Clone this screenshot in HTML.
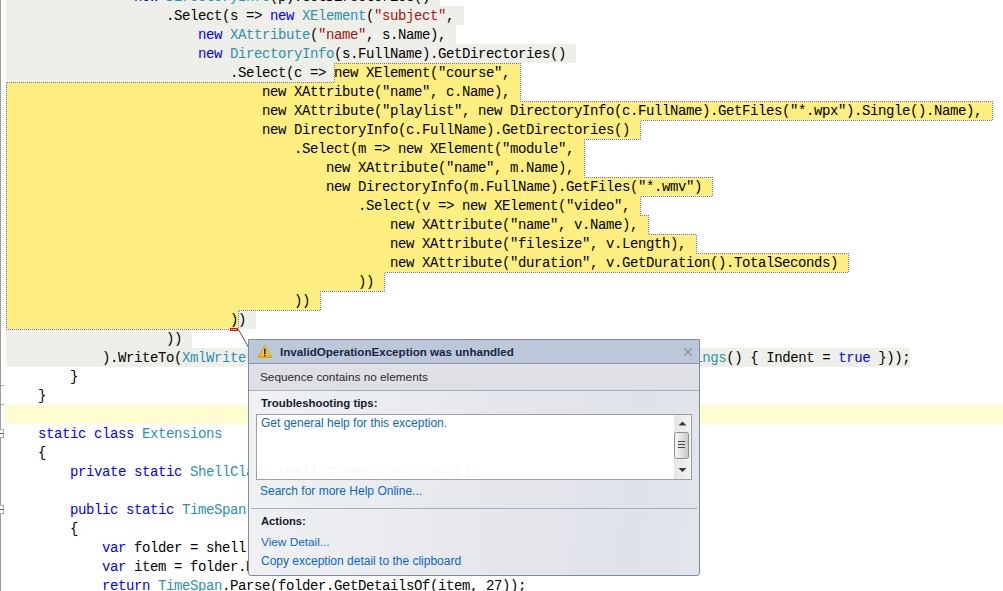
<!DOCTYPE html>
<html><head><meta charset="utf-8">
<style>
*{margin:0;padding:0;box-sizing:border-box}
html,body{width:1003px;height:591px;overflow:hidden;background:#fff}
body{position:relative}
.g,.y{position:absolute;height:19px}
.g{background:#efefe9}
.y{background:#ffee80}
.cur{position:absolute;left:5px;top:405px;width:998px;height:19px;background:#fffcd0}
.ln{position:absolute;height:20px;white-space:pre;font-family:"Liberation Mono",monospace;font-size:14px;letter-spacing:-0.4px;line-height:19px;padding-top:1px;color:#000}
.ln i{font-style:normal}
.k{color:#0000ff}.t{color:#2b91af}.s{color:#a31515}
.yel i{color:#000}
#outline{position:absolute;left:0;top:0;width:1px;height:591px;background:#9c9c9c}
.tick{position:absolute;left:0;width:4px;height:1px;background:#a5a5a5}
.box{position:absolute;left:-5px;width:9px;height:9px;border:1px solid #a5a5a5;background:#fff}
.box:after{content:"";position:absolute;left:4px;top:3px;width:3px;height:1px;background:#555}
svg.ov{position:absolute;left:0;top:0}
#pop{position:absolute;left:248px;top:339px;width:452px;height:237px;border:1px solid #7a8ca4;
 background:linear-gradient(95deg,#f0f1f3 0%,#e8e9ed 45%,#dfe2e9 85%,#e2e5ea 100%);
 font-family:"Liberation Sans",sans-serif;font-size:12px;border-radius:0 0 3px 3px;}
#title{position:absolute;left:0;top:0;width:450px;height:24px;background:#bcc8da;border-bottom:1px solid #8595ab}
#title b{position:absolute;left:31px;top:5px;color:#182640;font-size:11.6px;white-space:nowrap}
#close{position:absolute;left:435px;top:8px;width:8px;height:8px}
#msgband{position:absolute;left:0;top:24px;width:450px;height:27px;background:#dfe0e5;border-bottom:1px solid #a4b0c0}
.txt{position:absolute;white-space:nowrap}
.lnk{color:#0a66c8}
#lb{position:absolute;left:7px;top:74px;width:436px;height:66px;border:1px solid #a0a0a0;background:#fff}
#sb{position:absolute;right:0;top:0;width:17px;height:64px;background:linear-gradient(90deg,#e6e6e6,#f2f2f2)}
#sep2{position:absolute;left:2px;top:168px;width:446px;height:1px;background:#a4b0c0}
</style></head><body>
<div class="g" style="left:6px;top:-13px;width:434px"></div>
<div class="g" style="left:6px;top:6px;width:458px"></div>
<div class="g" style="left:6px;top:25px;width:450px"></div>
<div class="g" style="left:6px;top:44px;width:570px"></div>
<div class="g" style="left:6px;top:63px;width:328px"></div>
<div class="g" style="left:238px;top:310px;width:18px"></div>
<div class="g" style="left:6px;top:329px;width:186px"></div>
<div class="g" style="left:6px;top:348px;width:904px"></div>
<div class="y" style="left:334px;top:63px;width:186px"></div>
<div class="y" style="left:6px;top:82px;width:514px"></div>
<div class="y" style="left:6px;top:101px;width:986px"></div>
<div class="y" style="left:6px;top:120px;width:634px"></div>
<div class="y" style="left:6px;top:139px;width:578px"></div>
<div class="y" style="left:6px;top:158px;width:578px"></div>
<div class="y" style="left:6px;top:177px;width:706px"></div>
<div class="y" style="left:6px;top:196px;width:634px"></div>
<div class="y" style="left:6px;top:215px;width:642px"></div>
<div class="y" style="left:6px;top:234px;width:690px"></div>
<div class="y" style="left:6px;top:253px;width:842px"></div>
<div class="y" style="left:6px;top:272px;width:378px"></div>
<div class="y" style="left:6px;top:291px;width:314px"></div>
<div class="y" style="left:6px;top:310px;width:232px"></div>
<div class="cur"></div>
<svg class="ov" width="1003" height="591" shape-rendering="crispEdges"><defs><pattern id="chk" x="0" y="0" width="2" height="2" patternUnits="userSpaceOnUse"><rect x="1" y="0" width="1" height="1" fill="#7070d0"/><rect x="0" y="1" width="1" height="1" fill="#7070d0"/></pattern></defs><g fill="url(#chk)"><rect x="334" y="63" width="187" height="1"/><rect x="520" y="63" width="1" height="39"/><rect x="520" y="101" width="473" height="1"/><rect x="992" y="101" width="1" height="20"/><rect x="640" y="120" width="353" height="1"/><rect x="640" y="120" width="1" height="20"/><rect x="584" y="139" width="57" height="1"/><rect x="584" y="139" width="1" height="39"/><rect x="584" y="177" width="129" height="1"/><rect x="712" y="177" width="1" height="20"/><rect x="640" y="196" width="73" height="1"/><rect x="640" y="196" width="1" height="20"/><rect x="640" y="215" width="9" height="1"/><rect x="648" y="215" width="1" height="20"/><rect x="648" y="234" width="49" height="1"/><rect x="696" y="234" width="1" height="20"/><rect x="696" y="253" width="153" height="1"/><rect x="848" y="253" width="1" height="20"/><rect x="384" y="272" width="465" height="1"/><rect x="384" y="272" width="1" height="20"/><rect x="320" y="291" width="65" height="1"/><rect x="320" y="291" width="1" height="20"/><rect x="238" y="310" width="83" height="1"/><rect x="238" y="310" width="1" height="20"/><rect x="6" y="329" width="233" height="1"/><rect x="6" y="82" width="1" height="248"/><rect x="6" y="82" width="329" height="1"/><rect x="334" y="63" width="1" height="20"/></g></svg>
<div class="ln" style="left:134px;top:-13px"><i class="k">new</i> <i class="t">DirectoryInfo</i>(p).GetDirectories()</div>
<div class="ln" style="left:166px;top:6px">.Select(s =&gt; <i class="k">new</i> <i class="t">XElement</i>(<i class="s">"subject"</i>,</div>
<div class="ln" style="left:198px;top:25px"><i class="k">new</i> <i class="t">XAttribute</i>(<i class="s">"name"</i>, s.Name),</div>
<div class="ln" style="left:198px;top:44px"><i class="k">new</i> <i class="t">DirectoryInfo</i>(s.FullName).GetDirectories()</div>
<div class="ln" style="left:230px;top:63px">.Select(c =&gt; new XElement("course",</div>
<div class="ln" style="left:262px;top:82px">new XAttribute("name", c.Name),</div>
<div class="ln" style="left:262px;top:101px">new XAttribute("playlist", new DirectoryInfo(c.FullName).GetFiles("*.wpx").Single().Name),</div>
<div class="ln" style="left:262px;top:120px">new DirectoryInfo(c.FullName).GetDirectories()</div>
<div class="ln" style="left:294px;top:139px">.Select(m =&gt; new XElement("module",</div>
<div class="ln" style="left:326px;top:158px">new XAttribute("name", m.Name),</div>
<div class="ln" style="left:326px;top:177px">new DirectoryInfo(m.FullName).GetFiles("*.wmv")</div>
<div class="ln" style="left:358px;top:196px">.Select(v =&gt; new XElement("video",</div>
<div class="ln" style="left:390px;top:215px">new XAttribute("name", v.Name),</div>
<div class="ln" style="left:390px;top:234px">new XAttribute("filesize", v.Length),</div>
<div class="ln" style="left:390px;top:253px">new XAttribute("duration", v.GetDuration().TotalSeconds)</div>
<div class="ln" style="left:358px;top:272px">))</div>
<div class="ln" style="left:294px;top:291px">))</div>
<div class="ln" style="left:230px;top:310px">))</div>
<div class="ln" style="left:166px;top:329px">))</div>
<div class="ln" style="left:102px;top:348px">).WriteTo(<i class="t">XmlWriter</i>.Create(<i class="s">"c:\\temp\\pluralsight2.xml"</i>, <i class="k">new</i> <i class="t">XmlWriterSettings</i>() { Indent = <i class="k">true</i> }));</div>
<div class="ln" style="left:70px;top:367px">}</div>
<div class="ln" style="left:38px;top:386px">}</div>
<div class="ln" style="left:38px;top:424px"><i class="k">static</i> <i class="k">class</i> <i class="t">Extensions</i></div>
<div class="ln" style="left:38px;top:443px">{</div>
<div class="ln" style="left:70px;top:462px"><i class="k">private</i> <i class="k">static</i> <i class="t">ShellClass</i> shell = <i class="k">new</i> <i class="t">ShellClass</i>();</div>
<div class="ln" style="left:70px;top:500px"><i class="k">public</i> <i class="k">static</i> <i class="t">TimeSpan</i> GetDuration(<i class="k">this</i> <i class="t">FileInfo</i> file)</div>
<div class="ln" style="left:70px;top:519px">{</div>
<div class="ln" style="left:102px;top:538px"><i class="k">var</i> folder = shell.NameSpace(file.DirectoryName);</div>
<div class="ln" style="left:102px;top:557px"><i class="k">var</i> item = folder.ParseName(file.Name);</div>
<div class="ln" style="left:102px;top:576px"><i class="k">return</i> <i class="t">TimeSpan</i>.Parse(folder.GetDetailsOf(item, 27));</div>
<div id="outline"></div>
<div class="tick" style="top:385px"></div>
<div class="tick" style="top:404px"></div>
<div class="box" style="top:429px"></div>
<div class="box" style="top:505px"></div>
<svg class="ov" width="1003" height="591"><line x1="238.5" y1="329.5" x2="248.5" y2="347.5" stroke="#555" stroke-width="1"/>
<rect x="230.5" y="328.5" width="7" height="2" fill="none" stroke="#f00" stroke-width="1"/></svg>
<div id="pop">
 <div id="title">
  <svg style="position:absolute;left:8px;top:5px" width="16" height="14"><defs><linearGradient id="wg" x1="0" x2="0" y1="0" y2="1"><stop offset="0" stop-color="#ffe84a"/><stop offset="1" stop-color="#f0b400"/></linearGradient></defs><path d="M7.8 0.5 L14.6 12.4 L1 12.4 Z" fill="url(#wg)" stroke="#c89000" stroke-width="0.7"/><rect x="7" y="3.6" width="1.6" height="5.4" fill="#222"/><rect x="7" y="9.8" width="1.6" height="1.6" fill="#222"/></svg>
  <b>InvalidOperationException was unhandled</b>
  <svg id="close" viewBox="0 0 8 8"><path d="M0.5 0.5 L7.5 7.5 M7.5 0.5 L0.5 7.5" stroke="#909090" stroke-width="1.1"/></svg>
 </div>
 <div id="msgband"><span class="txt" style="left:11px;top:6px;color:#2b2b2b;font-size:11.8px">Sequence contains no elements</span></div>
 <b class="txt" style="left:12px;top:57px;color:#111c30;font-size:11.4px">Troubleshooting tips:</b>
 <div id="lb"><span class="txt lnk" style="left:4px;top:1px">Get general help for this exception.</span>
  <div id="sb"><svg width="17" height="64" style="position:absolute;left:0;top:0">
<path d="M8.5 6.5 L12.5 10.5 L4.5 10.5 Z" fill="#3a3a3a"/>
<rect x="0.5" y="17.5" width="14" height="26" rx="2" fill="url(#thg)" stroke="#8e8f8f"/>
<path d="M4 26.5 H11 M4 29.5 H11 M4 32.5 H11" stroke="#444" stroke-width="1.2"/>
<path d="M4.5 53 L12.5 53 L8.5 57 Z" fill="#3a3a3a"/>
<defs><linearGradient id="thg" x1="0" x2="1" y1="0" y2="0"><stop offset="0" stop-color="#f6f6f6"/><stop offset="0.5" stop-color="#e2e2e2"/><stop offset="1" stop-color="#c8c8c8"/></linearGradient></defs>
</svg></div></div>
 <span class="txt lnk" style="left:11px;top:144px">Search for more Help Online...</span>
 <div id="sep2"></div>
 <b class="txt" style="left:12px;top:175px;color:#111c30;font-size:11.2px">Actions:</b>
 <span class="txt lnk" style="left:12px;top:195px;font-size:11.8px">View Detail...</span>
 <span class="txt lnk" style="left:12px;top:214px">Copy exception detail to the clipboard</span>
</div>
<div id="ghost" style="position:absolute;left:0;top:0;width:1003px;height:591px;clip-path:polygon(257px 415px,673px 415px,673px 478px,257px 478px);opacity:0.03">
<div class="ln" style="left:102px;top:348px">).WriteTo(<i class="t">XmlWriter</i>.Create(<i class="s">"c:\\temp\\pluralsight2.xml"</i>, <i class="k">new</i> <i class="t">XmlWriterSettings</i>() { Indent = <i class="k">true</i> }));</div>
<div class="ln" style="left:70px;top:367px">}</div>
<div class="ln" style="left:38px;top:386px">}</div>
<div class="ln" style="left:38px;top:424px"><i class="k">static</i> <i class="k">class</i> <i class="t">Extensions</i></div>
<div class="ln" style="left:38px;top:443px">{</div>
<div class="ln" style="left:70px;top:462px"><i class="k">private</i> <i class="k">static</i> <i class="t">ShellClass</i> shell = <i class="k">new</i> <i class="t">ShellClass</i>();</div>
<div class="ln" style="left:70px;top:500px"><i class="k">public</i> <i class="k">static</i> <i class="t">TimeSpan</i> GetDuration(<i class="k">this</i> <i class="t">FileInfo</i> file)</div>
<div class="ln" style="left:70px;top:519px">{</div>
<div class="ln" style="left:102px;top:538px"><i class="k">var</i> folder = shell.NameSpace(file.DirectoryName);</div>
<div class="ln" style="left:102px;top:557px"><i class="k">var</i> item = folder.ParseName(file.Name);</div>
<div class="ln" style="left:102px;top:576px"><i class="k">return</i> <i class="t">TimeSpan</i>.Parse(folder.GetDetailsOf(item, 27));</div>
</div>
</body></html>
